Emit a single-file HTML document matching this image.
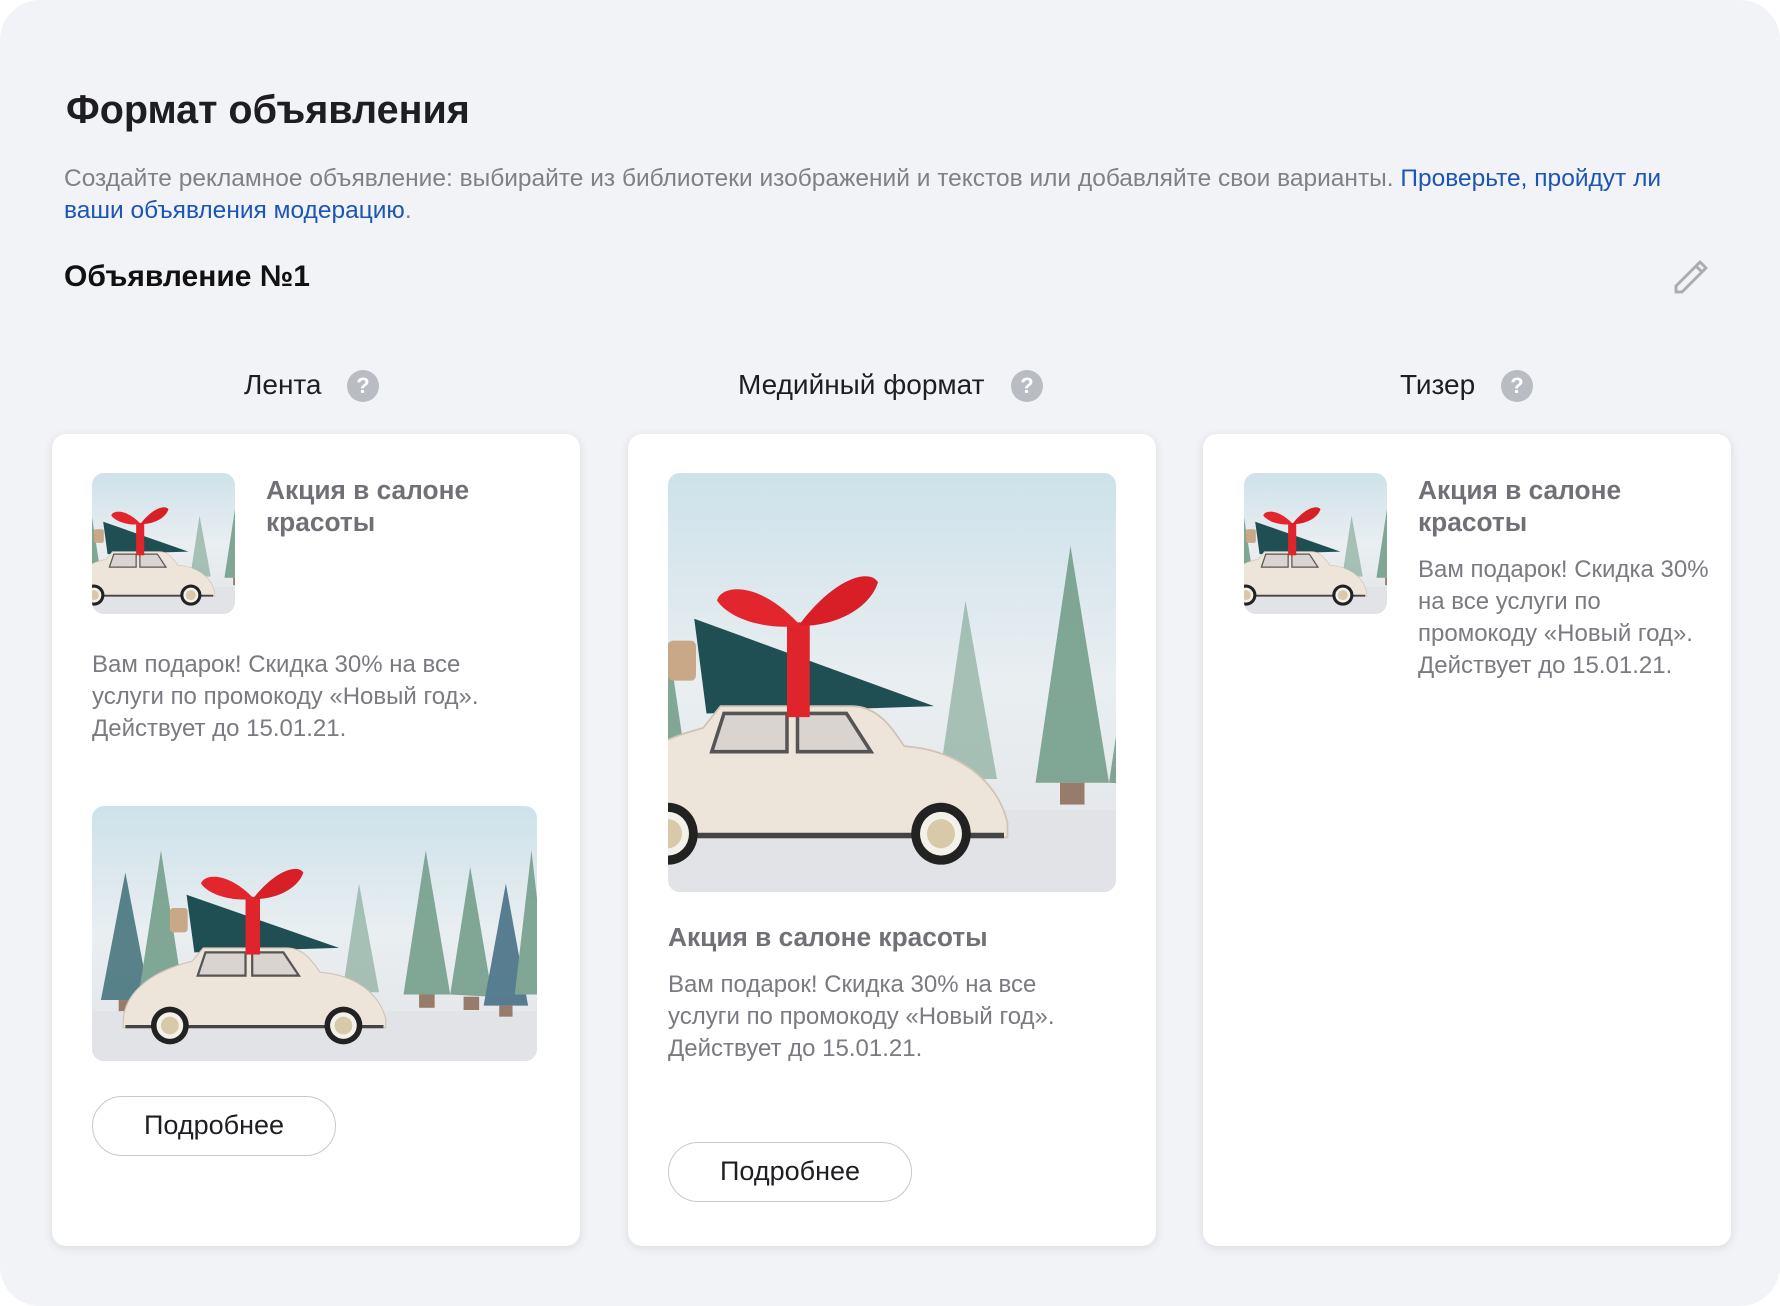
<!DOCTYPE html>
<html><head><meta charset="utf-8">
<style>
html,body{margin:0;padding:0;background:#fff;}
body{width:1780px;height:1306px;position:relative;overflow:hidden;font-family:"Liberation Sans","DejaVu Sans",sans-serif;}
.panel{position:absolute;left:0;top:0;width:1780px;height:1306px;background:#f2f3f6;border-radius:40px;}
.abs{position:absolute;white-space:nowrap;}
h1{position:absolute;left:66px;top:88px;margin:0;font-size:39.5px;font-weight:bold;color:#1e1e22;}
.desc{position:absolute;left:64px;top:163px;font-size:24.5px;line-height:32px;color:#808087;white-space:nowrap;}
.desc a{color:#1c55b3;text-decoration:none;}
.ad{position:absolute;left:64px;top:260px;font-size:30px;font-weight:bold;color:#111;}
.tab{position:absolute;top:369px;font-size:28px;color:#1e1e22;}
.q{position:absolute;top:370px;width:32px;height:32px;border-radius:50%;background:#b9bcc2;color:#fff;font-weight:bold;font-size:22px;text-align:center;line-height:32px;}
.card{position:absolute;top:434px;width:528px;height:812px;background:#fff;border-radius:14px;box-shadow:0 2px 10px rgba(0,0,0,0.10);}
.img{position:absolute;border-radius:12px;overflow:hidden;}
.img svg{display:block;width:100%;height:100%;}
.ttl{position:absolute;font-size:26.3px;font-weight:bold;color:#707076;line-height:32px;}
.txt{position:absolute;font-size:24px;color:#7a7a80;line-height:32px;white-space:nowrap;}
.btn{position:absolute;width:244px;height:60px;border:1.5px solid #c8c9cd;border-radius:30px;box-sizing:border-box;font-size:27px;color:#1e1e22;text-align:center;line-height:57px;}
</style></head><body>
<svg width="0" height="0" style="position:absolute">
<defs>
<linearGradient id="sky" x1="0" y1="0" x2="0" y2="1"><stop offset="0" stop-color="#cde2ea"/><stop offset="0.5" stop-color="#e9eef1"/><stop offset="1" stop-color="#e4e5e8"/></linearGradient>
<symbol id="scene" viewBox="0 0 400 230">
<rect width="400" height="230" fill="url(#sky)"/>
<rect y="185" width="400" height="45" fill="#e2e3e6"/>
<g opacity="0.85">
<polygon points="30,60 8,175 52,175" fill="#3f6f78"/><rect x="24" y="175" width="14" height="10" fill="#8a6a55"/>
<polygon points="62,40 42,170 82,170" fill="#6f9a86"/><rect x="56" y="170" width="14" height="10" fill="#8a6a55"/>
<polygon points="300,40 280,170 322,170" fill="#6f9a86"/><rect x="294" y="170" width="14" height="12" fill="#8a6a55"/>
<polygon points="340,55 322,170 360,172" fill="#6f9a86"/><rect x="334" y="172" width="14" height="12" fill="#8a6a55"/>
<polygon points="372,70 352,180 392,180" fill="#3f6a80"/><rect x="366" y="180" width="12" height="10" fill="#8a6a55"/>
<polygon points="395,40 380,170 410,170" fill="#6f9a86"/>
<polygon points="240,70 225,168 258,168" fill="#7aa28f" opacity="0.7"/>
</g>
<polygon points="85,80 92,132 222,128" fill="#1f4f52"/>
<rect x="70" y="92" width="16" height="22" rx="3" fill="#c8a886"/>
<path d="M28 196 C28 170 50 150 90 140 L100 128 L175 128 C190 128 198 140 205 150 C235 152 258 168 264 192 L264 200 L28 200 Z" fill="#eee5da" stroke="#cfc3b5" stroke-width="1"/>
<path d="M102 132 L138 132 L138 153 L95 153 Z" fill="#d9d4cf" stroke="#555" stroke-width="2"/>
<path d="M144 132 L172 132 L186 153 L144 153 Z" fill="#d9d4cf" stroke="#555" stroke-width="2"/>
<line x1="30" y1="199" x2="262" y2="199" stroke="#444" stroke-width="3"/>
<circle cx="70" cy="198" r="17" fill="#222"/><circle cx="70" cy="198" r="12" fill="#f4f1ea"/><circle cx="70" cy="198" r="8" fill="#d8c9a8"/>
<circle cx="226" cy="198" r="17" fill="#222"/><circle cx="226" cy="198" r="12" fill="#f4f1ea"/><circle cx="226" cy="198" r="8" fill="#d8c9a8"/>
<rect x="138" y="82" width="13" height="52" fill="#e0242b"/>
<path d="M144 82 C120 58 100 62 98 70 C105 80 125 86 144 84 Z" fill="#e3262d"/>
<path d="M146 82 C165 58 185 52 190 60 C185 75 165 84 146 84 Z" fill="#d81f27"/>
</symbol>
</defs></svg>
<div class="panel"></div>
<h1>Формат объявления</h1>
<div class="desc">Создайте рекламное объявление: выбирайте из библиотеки изображений и текстов или добавляйте свои варианты. <a>Проверьте, пройдут ли</a><br><a>ваши объявления модерацию</a>.</div>
<div class="ad">Объявление №1</div>
<svg class="abs" style="left:1668px;top:254px" width="44" height="42" viewBox="0 0 44 42"><path d="M8 32 L8 38 L14 38 L38 14 L32 8 Z M28 12 L34 18" fill="none" stroke="#a9acb1" stroke-width="3" stroke-linejoin="round"/></svg>

<div class="tab" style="left:244px">Лента</div><div class="q" style="left:347px">?</div>
<div class="tab" style="left:738px">Медийный формат</div><div class="q" style="left:1011px">?</div>
<div class="tab" style="left:1400px">Тизер</div><div class="q" style="left:1501px">?</div>

<div class="card" style="left:52px">
  <div class="img" style="left:40px;top:39px;width:143px;height:141px"><svg viewBox="67 0 230 230" preserveAspectRatio="xMidYMid slice"><use href="#scene" width="400" height="230"/></svg></div>
  <div class="ttl" style="left:214px;top:40px">Акция в салоне<br>красоты</div>
  <div class="txt" style="left:40px;top:215px">Вам подарок! Скидка 30% на все<br>услуги по промокоду «Новый год».<br>Действует до 15.01.21.</div>
  <div class="img" style="left:40px;top:372px;width:445px;height:255px"><svg viewBox="0 0 400 230" preserveAspectRatio="none"><use href="#scene" width="400" height="230"/></svg></div>
  <div class="btn" style="left:40px;top:662px">Подробнее</div>
</div>

<div class="card" style="left:628px">
  <div class="img" style="left:40px;top:39px;width:448px;height:419px"><svg viewBox="70 0 256 230" preserveAspectRatio="none"><use href="#scene" width="400" height="230"/></svg></div>
  <div class="ttl" style="left:40px;top:487px">Акция в салоне красоты</div>
  <div class="txt" style="left:40px;top:535px">Вам подарок! Скидка 30% на все<br>услуги по промокоду «Новый год».<br>Действует до 15.01.21.</div>
  <div class="btn" style="left:40px;top:708px">Подробнее</div>
</div>

<div class="card" style="left:1203px">
  <div class="img" style="left:41px;top:39px;width:143px;height:141px"><svg viewBox="67 0 230 230" preserveAspectRatio="xMidYMid slice"><use href="#scene" width="400" height="230"/></svg></div>
  <div class="ttl" style="left:215px;top:40px">Акция в салоне<br>красоты</div>
  <div class="txt" style="left:215px;top:120px">Вам подарок! Скидка 30%<br>на все услуги по<br>промокоду «Новый год».<br>Действует до 15.01.21.</div>
</div>
</body></html>
